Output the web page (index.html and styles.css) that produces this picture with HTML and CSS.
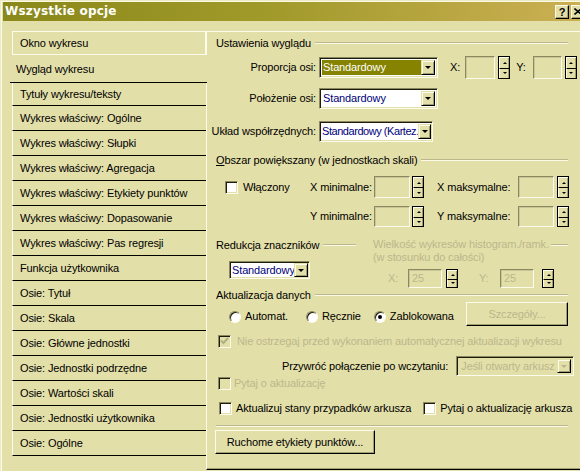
FILE: index.html
```html
<!DOCTYPE html>
<html lang="pl">
<head>
<meta charset="utf-8">
<title>Wszystkie opcje</title>
<link rel="stylesheet" href="styles.css">
</head>
<body>
<div class="dialog">
  <div class="titlebar">
    <span class="title">Wszystkie opcje</span>
    <div class="tb-buttons">
      <span class="tb-btn help">?</span>
      <span class="tb-btn close"><svg width="8" height="7" viewBox="0 0 8 7"><path d="M0.5 0.5 L7.5 6.5 M7.5 0.5 L0.5 6.5" stroke="#000" stroke-width="1.6"/></svg></span>
    </div>
  </div>
  <div class="content">
    <ul class="tabs">
      <li class="tab first">Okno wykresu</li>
      <li class="tab active">Wygląd wykresu</li>
      <li class="tab third">Tytuły wykresu/teksty</li>
      <li class="tab">Wykres właściwy: Ogólne</li>
      <li class="tab">Wykres właściwy: Słupki</li>
      <li class="tab">Wykres właściwy: Agregacja</li>
      <li class="tab">Wykres właściwy: Etykiety punktów</li>
      <li class="tab">Wykres właściwy: Dopasowanie</li>
      <li class="tab">Wykres właściwy: Pas regresji</li>
      <li class="tab">Funkcja użytkownika</li>
      <li class="tab">Osie: Tytuł</li>
      <li class="tab">Osie: Skala</li>
      <li class="tab">Osie: Główne jednostki</li>
      <li class="tab">Osie: Jednostki podrzędne</li>
      <li class="tab">Osie: Wartości skali</li>
      <li class="tab">Osie: Jednostki użytkownika</li>
      <li class="tab">Osie: Ogólne</li>
    </ul>

    <div class="panel">
      <div class="ghead r1"><span>Ustawienia wyglądu</span><i class="etch"></i></div>

      <div class="frow r2">
        <span class="flabel">Proporcja osi:</span>
        <div class="combo w119"><span class="ctext sel">Standardowy</span><span class="cbtn"><i class="tri"></i></span></div>
        <span class="xy-lab x1">X:</span>
        <span class="sinput in-x1"></span>
        <span class="spinner sp-x1"><span class="sup"><i></i></span><span class="sdn"><i></i></span></span>
        <span class="xy-lab y1">Y:</span>
        <span class="sinput in-y1"></span>
        <span class="spinner sp-y1"><span class="sup"><i></i></span><span class="sdn"><i></i></span></span>
      </div>

      <div class="frow r3">
        <span class="flabel">Położenie osi:</span>
        <div class="combo w119"><span class="ctext">Standardowy</span><span class="cbtn"><i class="tri"></i></span></div>
      </div>

      <div class="frow r4">
        <span class="flabel">Układ współrzędnych:</span>
        <div class="combo w114"><span class="ctext tight">Standardowy (Kartez.</span><span class="cbtn"><i class="tri"></i></span></div>
      </div>

      <div class="ghead r5"><span><u>O</u>bszar powiększany (w jednostkach skali)</span><i class="etch"></i></div>

      <div class="zrow r6">
        <label class="chk-item zoom-chk"><span class="chk"></span><span>Włączony</span></label>
        <span class="zlab zmin">X minimalne:</span>
        <span class="sinput zin"></span>
        <span class="spinner zsp"><span class="sup"><i></i></span><span class="sdn"><i></i></span></span>
        <span class="zlab zmax">X maksymalne:</span>
        <span class="sinput zin"></span>
        <span class="spinner zsp2"><span class="sup"><i></i></span><span class="sdn"><i></i></span></span>
      </div>

      <div class="zrow r7">
        <span class="zlab zmin ystart">Y minimalne:</span>
        <span class="sinput zin"></span>
        <span class="spinner zsp"><span class="sup"><i></i></span><span class="sdn"><i></i></span></span>
        <span class="zlab zmax">Y maksymalne:</span>
        <span class="sinput zin"></span>
        <span class="spinner zsp2"><span class="sup"><i></i></span><span class="sdn"><i></i></span></span>
      </div>

      <div class="split r8">
        <div class="leftcol">
          <div class="ghead"><span>Redukcja znaczników</span><i class="etch"></i></div>
          <div class="combo small"><span class="ctext">Standardowy</span><span class="cbtn"><i class="tri"></i></span></div>
        </div>
        <div class="rightcol">
          <div class="ghead dis line1"><span>Wielkość wykresów histogram./ramk.</span><i class="etch"></i></div>
          <div class="dis line2">(w stosunku do całości)</div>
          <div class="hrow">
            <span class="dis hx">X:</span>
            <span class="sinput hin dis">25</span>
            <span class="spinner hsp1"><span class="sup"><i></i></span><span class="sdn"><i></i></span></span>
            <span class="dis hy">Y:</span>
            <span class="sinput hin dis">25</span>
            <span class="spinner hsp2"><span class="sup"><i></i></span><span class="sdn"><i></i></span></span>
          </div>
        </div>
      </div>

      <div class="ghead r9"><span>Aktualizacja danych</span><i class="etch"></i></div>

      <div class="radrow r10">
        <label class="rad-item ri1"><span class="radio"></span><span>Automat.</span></label>
        <label class="rad-item ri2"><span class="radio"></span><span>Ręcznie</span></label>
        <label class="rad-item ri3"><span class="radio on"></span><span>Zablokowana</span></label>
        <span class="btn dis-btn">Szczegóły...</span>
      </div>

      <label class="chk-item r11 dis"><span class="chk disabled"><svg width="9" height="8" viewBox="0 0 9 8"><path d="M1 3.5 L3.5 6 L8 1" fill="none" stroke="#b3af84" stroke-width="2"/></svg></span><span>Nie ostrzegaj przed wykonaniem automatycznej aktualizacji wykresu</span></label>

      <div class="prow r12">
        <span class="plab">Przywróć połączenie po wczytaniu:</span>
        <div class="combo disabled-combo"><span class="ctext">Jeśli otwarty arkusz</span><span class="cbtn"><i class="tri gray"></i></span></div>
      </div>

      <label class="chk-item r13 dis"><span class="chk disabled"></span><span>Pytaj o aktualizację</span></label>

      <div class="crow r14">
        <label class="chk-item"><span class="chk"></span><span>Aktualizuj stany przypadków arkusza</span></label>
        <label class="chk-item c2"><span class="chk"></span><span>Pytaj o aktualizację arkusza</span></label>
      </div>

      <div class="sep r15"></div>

      <div class="r16"><span class="btn ruch">Ruchome etykiety punktów...</span></div>
    </div>
  </div>
</div>
</body>
</html>
```

FILE: styles.css
```css
:root {
  --bg: #e3dfa9;
  --hi: #fdfcec;
  --sh: #a29e74;
  --dk: #000;
  --dis: #bbb78b;
  --navy: #00007b;
  --sel: #858300;
}

* { box-sizing: border-box; }

html, body { margin: 0; padding: 0; }

body {
  width: 580px;
  height: 471px;
  overflow: hidden;
  background: var(--bg);
  font: 11px/13px "Liberation Sans", Arial, sans-serif;
  letter-spacing: -0.13px;
  color: #000;
}

.dialog {
  width: 580px;
  height: 471px;
  padding: 2px 0 0 3px;
  box-shadow: inset 1px 1px 0 #eeeac4, inset 2px 2px 0 #fbfae8;
  display: flex;
  flex-direction: column;
}

/* title bar */
.titlebar {
  height: 19px;
  flex: none;
  display: flex;
  align-items: center;
  margin-right: -7px;
  padding: 0 2px 0 2px;
  background: linear-gradient(to right, #8a881a 0%, #a09a2a 45%, #ccb054 100%);
}

.title {
  color: #fff;
  font: bold 12px/19px "DejaVu Sans", sans-serif;
  letter-spacing: 0.2px;
}

.tb-buttons {
  margin-left: auto;
  display: flex;
  gap: 2px;
}

.tb-btn {
  width: 14px;
  height: 14px;
  display: flex;
  align-items: center;
  justify-content: center;
  background: var(--bg);
  border: 1px solid;
  border-color: var(--hi) var(--dk) var(--dk) var(--hi);
  box-shadow: inset -1px -1px 0 var(--sh);
  font: bold 11px/12px "Liberation Sans", Arial, sans-serif;
}

/* content */
.content {
  flex: 1;
  display: flex;
  align-items: flex-start;
}

.tabs {
  list-style: none;
  margin: 10px 0 0 9px;
  padding: 0;
  width: 194px;
  flex: none;
}

.tab {
  height: 25px;
  padding: 1px 0 0 7px;
  line-height: 23px;
  border-left: 1px solid var(--hi);
  border-bottom: 1px solid var(--dk);
  white-space: nowrap;
}

.tab.first {
  height: 24px;
  padding-top: 0;
  line-height: 22px;
  border: 1px solid var(--hi);
}

.tab.active {
  position: relative;
  z-index: 1;
  height: 28px;
  margin-left: -2px;
  margin-right: -1px;
  padding: 2px 0 0 6px;
  line-height: 25px;
  background: var(--bg);
  border-left: none;
}

.tab.third {
  height: 23px;
  padding-top: 0;
  line-height: 22px;
}

/* panel */
.panel {
  flex: none;
  width: 380px;
  height: 439px;
  margin-top: 10px;
  padding: 4px 18px 0 9px;
  border-top: 1px solid var(--hi);
  border-left: 1px solid var(--hi);
  border-bottom: 1px solid var(--dk);
  box-shadow: inset 0 -1px 0 var(--sh);
  display: flex;
  flex-direction: column;
}

.ghead {
  display: flex;
  align-items: center;
  gap: 4px;
  height: 14px;
  white-space: nowrap;
}

.etch {
  flex: 1;
  height: 2px;
  border-top: 1px solid #bcb88e;
  border-bottom: 1px solid #fbfae6;
}

.dis { color: var(--dis); }

.r1 { flex: none; }
.r2 { margin-top: 6px; height: 23px; }
.r3 { margin-top: 9px; height: 21px; }
.r4 { margin-top: 12px; height: 21px; }
.r5 { margin-top: 11px; }
.r6 { margin-top: 9px; height: 22px; }
.r7 { margin-top: 8px; height: 21px; }
.r8 { margin-top: 11px; height: 50px; }
.r9 { margin-top: 0; }
.r10 { height: 24px; }
.r11 { margin-top: 8px; height: 14px; }
.r12 { margin-top: 8px; height: 20px; }
.r13 { margin-top: 1px; height: 13px; }
.r14 { margin-top: 11px; height: 14px; }
.r15 { margin-top: 10px; }
.r16 { margin-top: 3px; height: 24px; display: flex; }

/* form rows */
.frow {
  display: flex;
  align-items: center;
  flex: none;
}

.flabel {
  width: 100px;
  flex: none;
  display: flex;
  justify-content: flex-end;
  white-space: nowrap;
  margin-right: 3px;
}

.combo {
  flex: none;
  display: flex;
  height: 21px;
  padding: 2px;
  background: #fff;
  border: 1px solid;
  border-color: #8c8860 var(--hi) var(--hi) #8c8860;
  box-shadow: inset 1px 1px 0 #1c1c0c, inset -1px -1px 0 var(--bg);
}

.w119 { width: 119px; }
.w114 { width: 114px; padding: 2px 1px 2px 2px; }
.w114 .cbtn { width: 13px; }

.ctext {
  flex: 1;
  min-width: 0;
  overflow: hidden;
  white-space: nowrap;
  color: var(--navy);
  padding-left: 1px;
  line-height: 15px;
}

.ctext.tight { letter-spacing: -0.45px; padding-left: 0; }

.ctext.sel {
  background: var(--sel);
  color: #fff;
}

.cbtn {
  flex: none;
  width: 14px;
  display: flex;
  align-items: center;
  justify-content: center;
  background: var(--bg);
  border: 1px solid;
  border-color: var(--bg) var(--dk) var(--dk) var(--bg);
  box-shadow: inset 1px 1px 0 var(--hi), inset -1px -1px 0 var(--sh);
}

.tri {
  width: 0;
  height: 0;
  border-left: 3px solid transparent;
  border-right: 3px solid transparent;
  border-top: 3px solid #000;
}

.tri.gray { border-top-color: var(--dis); }

.sinput {
  flex: none;
  height: 100%;
  border: 1px solid;
  border-color: #8c8860 var(--hi) var(--hi) #8c8860;
  box-shadow: inset 1px 1px 0 #c9c596;
  padding: 2px 0 0 3px;
}

.spinner {
  flex: none;
  width: 12px;
  height: 100%;
  display: flex;
  flex-direction: column;
  border: 1px solid var(--dk);
  background: var(--bg);
}

.spinner > span {
  flex: 1;
  display: flex;
  align-items: center;
  justify-content: center;
  border-top: 1px solid var(--hi);
  border-left: 1px solid var(--hi);
  box-shadow: inset -1px 0 0 var(--sh);
}

.spinner .sdn { border-top: 1px solid var(--dk); }

.sup i {
  border-left: 2px solid transparent;
  border-right: 2px solid transparent;
  border-bottom: 2px solid #000;
}

.sdn i {
  border-left: 2px solid transparent;
  border-right: 2px solid transparent;
  border-top: 2px solid #000;
}

.x1 { margin-left: 12px; }
.in-x1 { margin-left: 5px; width: 30px; }
.sp-x1 { margin-left: 3px; }
.y1 { margin-left: 6px; }
.in-y1 { margin-left: 7px; width: 29px; }
.sp-y1 { margin-left: 3px; }

/* zoom area rows */
.zrow {
  display: flex;
  align-items: center;
  flex: none;
}

.chk-item {
  display: flex;
  align-items: center;
  gap: 5px;
  white-space: nowrap;
}

.zoom-chk {
  width: 85px;
  margin-left: 9px;
  flex: none;
}

.chk {
  flex: none;
  width: 13px;
  height: 13px;
  display: flex;
  align-items: center;
  justify-content: center;
  background: #fff;
  border: 1px solid;
  border-color: #8c8860 var(--hi) var(--hi) #8c8860;
  box-shadow: inset 1px 1px 0 #1c1c0c, inset -1px -1px 0 var(--bg);
}

.chk.disabled { background: var(--bg); }

.zlab { flex: none; white-space: nowrap; }
.zmin { width: 64px; }
.ystart { margin-left: 94px; }
.zmax { width: 81px; margin-left: 13px; }
.zin { width: 36px; }
.zsp { margin-left: 2px; }
.zsp2 { margin-left: 3px; }

/* split section */
.split {
  display: flex;
  flex: none;
}

.leftcol {
  width: 140px;
  flex: none;
}

.combo.small {
  width: 81px;
  height: 18px;
  padding: 1px;
  margin: 9px 0 0 13px;
}

.combo.small .ctext { line-height: 14px; padding-left: 1px; }

.rightcol {
  flex: 1;
  margin-left: 17px;
}

.line1 { height: 13px; gap: 2px; }
.line2 { height: 13px; white-space: nowrap; }

.hrow {
  display: flex;
  align-items: center;
  height: 19px;
  margin-top: 5px;
}

.hx { margin-left: 15px; width: 20px; }
.hin { width: 34px; color: var(--dis); padding-top: 2px; }
.hsp1 { margin-left: 4px; }
.hy { margin-left: 21px; width: 21px; }
.hsp2 { margin-left: 8px; }

/* radios */
.radrow {
  display: flex;
  align-items: flex-start;
  flex: none;
}

.rad-item {
  display: flex;
  align-items: center;
  gap: 4px;
  margin-top: 8px;
  white-space: nowrap;
}

.ri1 { margin-left: 13px; }
.ri2 { margin-left: 18px; }
.ri3 { margin-left: 13px; }

.radio {
  width: 12px;
  height: 12px;
  border-radius: 50%;
  background: #fff;
  border: 1px solid;
  border-color: #8c8860 var(--hi) var(--hi) #8c8860;
  box-shadow: inset 1px 1px 0 #1c1c0c;
  display: flex;
  align-items: center;
  justify-content: center;
}

.radio.on::after {
  content: "";
  width: 4px;
  height: 4px;
  border-radius: 50%;
  background: #000;
}

.btn {
  display: flex;
  align-items: center;
  justify-content: center;
  height: 24px;
  background: var(--bg);
  border: 1px solid;
  border-color: var(--hi) var(--dk) var(--dk) var(--hi);
  box-shadow: inset -1px -1px 0 var(--sh);
  white-space: nowrap;
}

.dis-btn {
  width: 102px;
  margin-left: auto;
  color: var(--dis);
}

.r11, .r13 { margin-left: 2px; flex: none; }
.r11 { gap: 6px; }
.r13 { gap: 3px; }

.prow {
  display: flex;
  align-items: center;
  flex: none;
}

.plab { margin-left: 66px; white-space: nowrap; }

.disabled-combo {
  width: 118px;
  height: 20px;
  margin-left: 8px;
  background: var(--bg);
}

.disabled-combo .ctext { color: var(--dis); line-height: 14px; padding-left: 2px; }

.crow {
  display: flex;
  align-items: center;
  flex: none;
  margin-left: 3px;
}

.crow .chk-item { gap: 4px; }
.c2 { margin-left: 12px; }

.sep {
  height: 2px;
  flex: none;
  border-top: 1px solid #bcb88e;
  border-bottom: 1px solid #fbfae6;
}

.ruch {
  width: 160px;
  margin-left: -1px;
}
```
